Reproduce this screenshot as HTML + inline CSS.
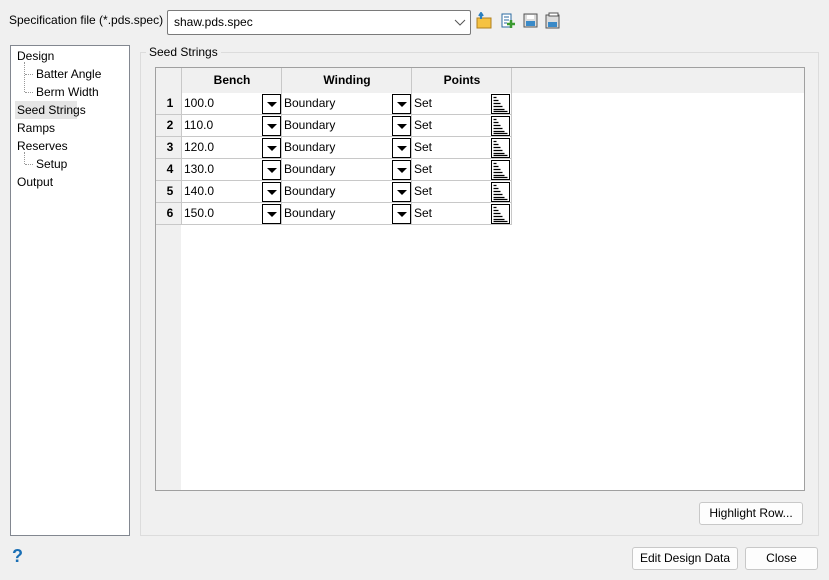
<!DOCTYPE html>
<html><head><meta charset="utf-8"><style>
*{box-sizing:border-box;margin:0;padding:0}
body{width:829px;height:580px;background:#f0f0f0;font-family:"Liberation Sans",sans-serif;font-size:12px;color:#000;position:relative;overflow:hidden}
.a{position:absolute}
.btn{position:absolute;background:#fdfdfd;border:1px solid #c8c8c8;border-radius:3px;text-align:center;line-height:20px;font-size:12px}
.cell{position:absolute;height:22px;line-height:21px;font-size:12px}
.dd{position:absolute;width:19px;height:20px;border:1px solid #000;background:#fff}
.dd:after{content:"";position:absolute;left:4px;top:7px;border-left:5px solid transparent;border-right:5px solid transparent;border-top:5px solid #000}
.pt{position:absolute;width:19px;height:20px;border:1px solid #000;background:#fff}
</style></head><body>
<div class="a" style="left:9px;top:13px">Specification file (*.pds.spec)</div>
<div class="a" style="left:167px;top:10px;width:304px;height:25px;background:#fff;border:1px solid #7a7a7a;border-radius:2px"><span class="a" style="left:6px;top:4px">shaw.pds.spec</span>
<svg class="a" style="left:286px;top:8px" width="12" height="8"><path d="M1 1 L6 6 L11 1" stroke="#555" fill="none"/></svg></div>
<svg class="a" style="left:476px;top:12px" width="90" height="18">
<rect x="1" y="6" width="14" height="10" fill="#f5c242" stroke="#b08020"/><path d="M5 7 L5 2 M3 4 L5 1 L7 4" stroke="#2a7fc0" stroke-width="2" fill="none"/>
<rect x="26" y="2" width="9" height="13" fill="#fff" stroke="#2a6aa0"/><path d="M28 5h5M28 8h5M28 11h3" stroke="#2a6aa0"/><path d="M35 8v8M31 12h8" stroke="#3a9a30" stroke-width="2.5"/>
<rect x="48" y="2" width="13" height="13" fill="#ddd" stroke="#555"/><rect x="50" y="9" width="9" height="5" fill="#3a8ac8"/><rect x="51" y="3" width="7" height="4" fill="#fff"/>
<rect x="70" y="3" width="13" height="13" fill="#ddd" stroke="#555"/><rect x="72" y="10" width="9" height="5" fill="#3a8ac8"/><rect x="73" y="1" width="9" height="3" fill="#fff" stroke="#555"/>
</svg>
<div class="a" style="left:10px;top:45px;width:120px;height:491px;background:#fff;border:1px solid #828790"></div>
<div class="a" style="left:17px;top:49px">Design</div>
<div class="a" style="left:24px;top:62px;height:30px;border-left:1px dotted #999"></div>
<div class="a" style="left:25px;top:74px;width:8px;border-top:1px dotted #999"></div>
<div class="a" style="left:25px;top:92px;width:8px;border-top:1px dotted #999"></div>
<div class="a" style="left:36px;top:67px">Batter Angle</div>
<div class="a" style="left:36px;top:85px">Berm Width</div>
<div class="a" style="left:15px;top:101px;width:62px;height:18px;background:#e5e5e5"></div>
<div class="a" style="left:17px;top:103px">Seed Strings</div>
<div class="a" style="left:17px;top:121px">Ramps</div>
<div class="a" style="left:17px;top:139px">Reserves</div>
<div class="a" style="left:24px;top:152px;height:12px;border-left:1px dotted #999"></div>
<div class="a" style="left:25px;top:164px;width:8px;border-top:1px dotted #999"></div>
<div class="a" style="left:36px;top:157px">Setup</div>
<div class="a" style="left:17px;top:175px">Output</div>
<div class="a" style="left:140px;top:52px;width:679px;height:484px;border:1px solid #dcdcdc"></div>
<div class="a" style="left:146px;top:45px;background:#f0f0f0;padding:0 3px">Seed Strings</div>
<div class="a" style="left:155px;top:67px;width:650px;height:424px;background:#fff;border:1px solid #a0a0a0"></div>
<div class="a" style="left:156px;top:68px;width:648px;height:25px;background:#f0f0f0"></div>
<div class="a" style="left:156px;top:68px;width:25px;height:422px;background:#f0f0f0"></div>
<div class="a" style="left:181px;top:68px;width:331px;height:25px;border-left:1px solid #c8c8c8;border-right:1px solid #c8c8c8"></div>
<div class="a" style="left:281px;top:68px;height:25px;border-left:1px solid #c8c8c8"></div>
<div class="a" style="left:411px;top:68px;height:25px;border-left:1px solid #c8c8c8"></div>
<div class="cell" style="left:182px;top:70px;width:100px;text-align:center;font-weight:bold">Bench</div>
<div class="cell" style="left:282px;top:70px;width:130px;text-align:center;font-weight:bold">Winding</div>
<div class="cell" style="left:412px;top:70px;width:100px;text-align:center;font-weight:bold">Points</div>
<div id="rows"></div>
<script>
var h='';for(var i=0;i<6;i++){var y=93+i*22;
h+='<div class="a" style="left:156px;top:'+y+'px;width:356px;height:22px;border-bottom:1px solid #c8c8c8"></div>';
h+='<div class="a" style="left:181px;top:'+y+'px;width:331px;height:22px;border-left:1px solid #c8c8c8;border-right:1px solid #c8c8c8"></div>';
h+='<div class="a" style="left:281px;top:'+y+'px;height:22px;border-left:1px solid #c8c8c8"></div><div class="a" style="left:411px;top:'+y+'px;height:22px;border-left:1px solid #c8c8c8"></div>';
h+='<div class="cell" style="left:156px;top:'+y+'px;width:25px;text-align:center;font-weight:bold;padding-left:3px">'+(i+1)+'</div>';
h+='<div class="cell" style="left:184px;top:'+y+'px">'+(100+i*10)+'.0</div><div class="dd" style="left:262px;top:'+(y+1)+'px"></div>';
h+='<div class="cell" style="left:284px;top:'+y+'px">Boundary</div><div class="dd" style="left:392px;top:'+(y+1)+'px"></div>';
h+='<div class="cell" style="left:414px;top:'+y+'px">Set</div><div class="pt" style="left:491px;top:'+(y+1)+'px"><svg width="17" height="18" style="position:absolute;left:0;top:0"><path d="M1.5 2.5h3M1.5 5.5h5M1.5 8.5h7M1.5 11.5h9M1.5 14.5h11M1.5 16.5h14" stroke="#000" stroke-width="1.2"/></svg></div>';}
document.getElementById('rows').innerHTML=h;
</script>
<div class="btn" style="left:699px;top:502px;width:104px;height:23px">Highlight Row...</div>
<div class="a" style="left:12px;top:546px;color:#1a6fb5;font-weight:bold;font-size:18px">?</div>
<div class="btn" style="left:632px;top:547px;width:106px;height:23px">Edit Design Data</div>
<div class="btn" style="left:745px;top:547px;width:73px;height:23px">Close</div>
</body></html>
